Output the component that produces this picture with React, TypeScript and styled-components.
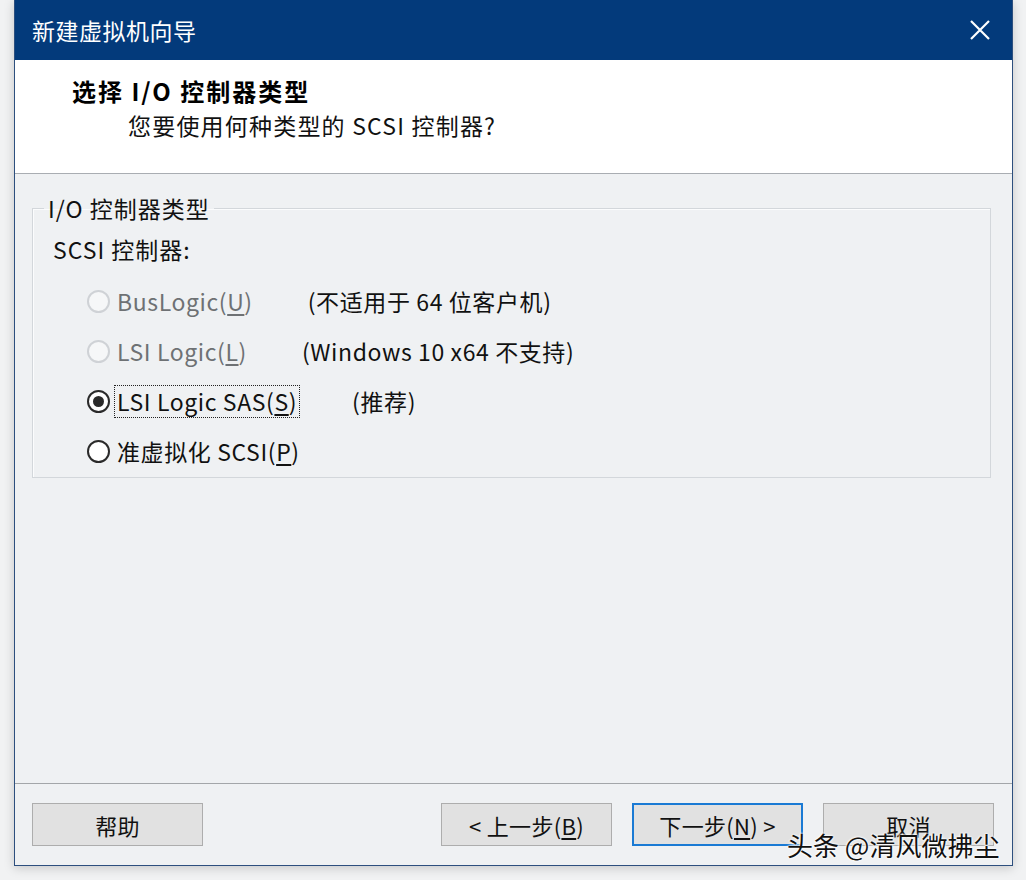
import React from "react";
import styled, { createGlobalStyle } from "styled-components";

const Global = createGlobalStyle`
  html, body { margin: 0; padding: 0; background: #f1f2f3; }
  body { font-family: "Noto Sans CJK SC", "Noto Sans", sans-serif; }
  * { box-sizing: border-box; }
`;

const Page = styled.div`
  width: 1026px;
  height: 880px;
  padding-left: 14px;
  background: #f1f2f3;
  position: relative;
  overflow: hidden;
`;

const Window = styled.div`
  width: 999px;
  height: 866px;
  display: flex;
  flex-direction: column;
  border: 1px solid #2d4f7e;
  border-top: none;
  box-shadow: 0 2px 10px rgba(0, 0, 0, 0.18);
  background: #eff1f3;
`;

const TitleBar = styled.div`
  height: 60px;
  flex: none;
  background: #033a7b;
  display: flex;
  align-items: center;
  justify-content: space-between;
  padding: 0 20px 0 17px;
  color: #fff;
  font-size: 23px;
  letter-spacing: 0.5px;
`;

const CloseBtn = styled.div`
  width: 24px;
  height: 24px;
  display: flex;
  align-items: center;
  justify-content: center;
`;

const Header = styled.div`
  height: 114px;
  flex: none;
  background: #fff;
  border-bottom: 1px solid #a9adb2;
  padding: 14px 0 0 57px;
`;

const Heading = styled.div`
  font-size: 24px;
  font-weight: 700;
  color: #000;
  line-height: 34px;
  letter-spacing: 2px;
`;

const SubTitle = styled.div`
  font-size: 23px;
  color: #111;
  line-height: 32px;
  margin-top: 1px;
  padding-left: 56px;
  letter-spacing: 1.2px;
`;

const Body = styled.div`
  flex: 1;
  padding: 20px 20px 0 17px;
`;

const Group = styled.fieldset`
  margin: 0;
  width: 959px;
  height: 284px;
  border: 1px solid #d3d7db;
  box-shadow: inset 1px 1px 0 #fbfcfd;
  padding: 4px 0 0 20px;
`;

const Legend = styled.legend`
  font-size: 23px;
  color: #111;
  padding: 0 4px;
  margin-left: -9px;
  line-height: 28px;
  letter-spacing: 1px;
`;

const GroupLabel = styled.div`
  font-size: 23px;
  color: #111;
  line-height: 30px;
  margin-top: 8px;
  margin-bottom: 12px;
  letter-spacing: 1px;
`;

const Row = styled.div`
  display: flex;
  align-items: center;
  height: 50px;
  padding-left: 34px;
`;

const Radio = styled.span<{ $disabled?: boolean; $checked?: boolean }>`
  width: 23px;
  height: 23px;
  border-radius: 50%;
  flex: none;
  border: 2px solid ${(p) => (p.$disabled ? "#cfd2d6" : "#2a2a2a")};
  background: ${(p) => (p.$disabled ? "#f6f7f8" : "#fff")};
  display: flex;
  align-items: center;
  justify-content: center;
  margin-right: 6px;
  &::after {
    content: "";
    display: ${(p) => (p.$checked ? "block" : "none")};
    width: 11px;
    height: 11px;
    border-radius: 50%;
    background: #2a2a2a;
  }
`;

const Label = styled.span<{ $disabled?: boolean; $focused?: boolean }>`
  font-size: 23px;
  line-height: 29px;
  letter-spacing: 0.6px;
  color: ${(p) => (p.$disabled ? "#6e7174" : "#111")};
  outline: ${(p) => (p.$focused ? "1px dotted #222" : "none")};
  outline-offset: 1px;
  padding: 0 1px;
`;

const Key = styled.span`
  text-decoration: underline;
  text-underline-offset: 3px;
`;

const Note = styled.span`
  font-size: 23px;
  letter-spacing: 0.6px;
  color: #111;
  margin-left: 54px;
`;

const Footer = styled.div`
  height: 82px;
  flex: none;
  border-top: 1px solid #a3a6a9;
  display: flex;
  align-items: flex-start;
  padding: 19px 18px 0 17px;
`;

const Button = styled.div<{ $primary?: boolean }>`
  width: 171px;
  height: 43px;
  background: #e1e1e1;
  border: ${(p) => (p.$primary ? "2px solid #1a7ad4" : "1px solid #adadad")};
  display: flex;
  align-items: center;
  justify-content: center;
  font-size: 22px;
  letter-spacing: 0.3px;
  color: #111;
`;

const Spacer = styled.div`
  flex: 1;
`;

const ButtonGroup = styled.div`
  display: flex;
  gap: 20px;
`;

const Watermark = styled.div`
  position: absolute;
  left: 787px;
  top: 826px;
  font-size: 26px;
  color: #111;
  text-shadow: 0 0 2px #fff, 0 0 2px #fff, 0 0 3px #fff;
`;

export default function App() {
  return (
    <>
      <Global />
      <Page>
        <Window>
          <TitleBar>
            <span>新建虚拟机向导</span>
            <CloseBtn>
              <svg width="22" height="22" viewBox="0 0 22 22">
                <path d="M2 2 L20 20 M20 2 L2 20" stroke="#fff" strokeWidth="2.2" />
              </svg>
            </CloseBtn>
          </TitleBar>
          <Header>
            <Heading>选择 I/O 控制器类型</Heading>
            <SubTitle>您要使用何种类型的 SCSI 控制器?</SubTitle>
          </Header>
          <Body>
            <Group>
              <Legend>I/O 控制器类型</Legend>
              <GroupLabel>SCSI 控制器:</GroupLabel>
              <Row>
                <Radio $disabled />
                <Label $disabled>
                  BusLogic(<Key>U</Key>)
                </Label>
                <Note>(不适用于 64 位客户机)</Note>
              </Row>
              <Row>
                <Radio $disabled />
                <Label $disabled>
                  LSI Logic(<Key>L</Key>)
                </Label>
                <Note>(Windows 10 x64 不支持)</Note>
              </Row>
              <Row>
                <Radio $checked />
                <Label $focused>
                  LSI Logic SAS(<Key>S</Key>)
                </Label>
                <Note>(推荐)</Note>
              </Row>
              <Row>
                <Radio />
                <Label>
                  准虚拟化 SCSI(<Key>P</Key>)
                </Label>
              </Row>
            </Group>
          </Body>
          <Footer>
            <Button>帮助</Button>
            <Spacer />
            <ButtonGroup>
              <Button>
                &lt; 上一步(<Key>B</Key>)
              </Button>
              <Button $primary>
                下一步(<Key>N</Key>) &gt;
              </Button>
              <Button>取消</Button>
            </ButtonGroup>
          </Footer>
        </Window>
        <Watermark>头条 @清风微拂尘</Watermark>
      </Page>
    </>
  );
}
